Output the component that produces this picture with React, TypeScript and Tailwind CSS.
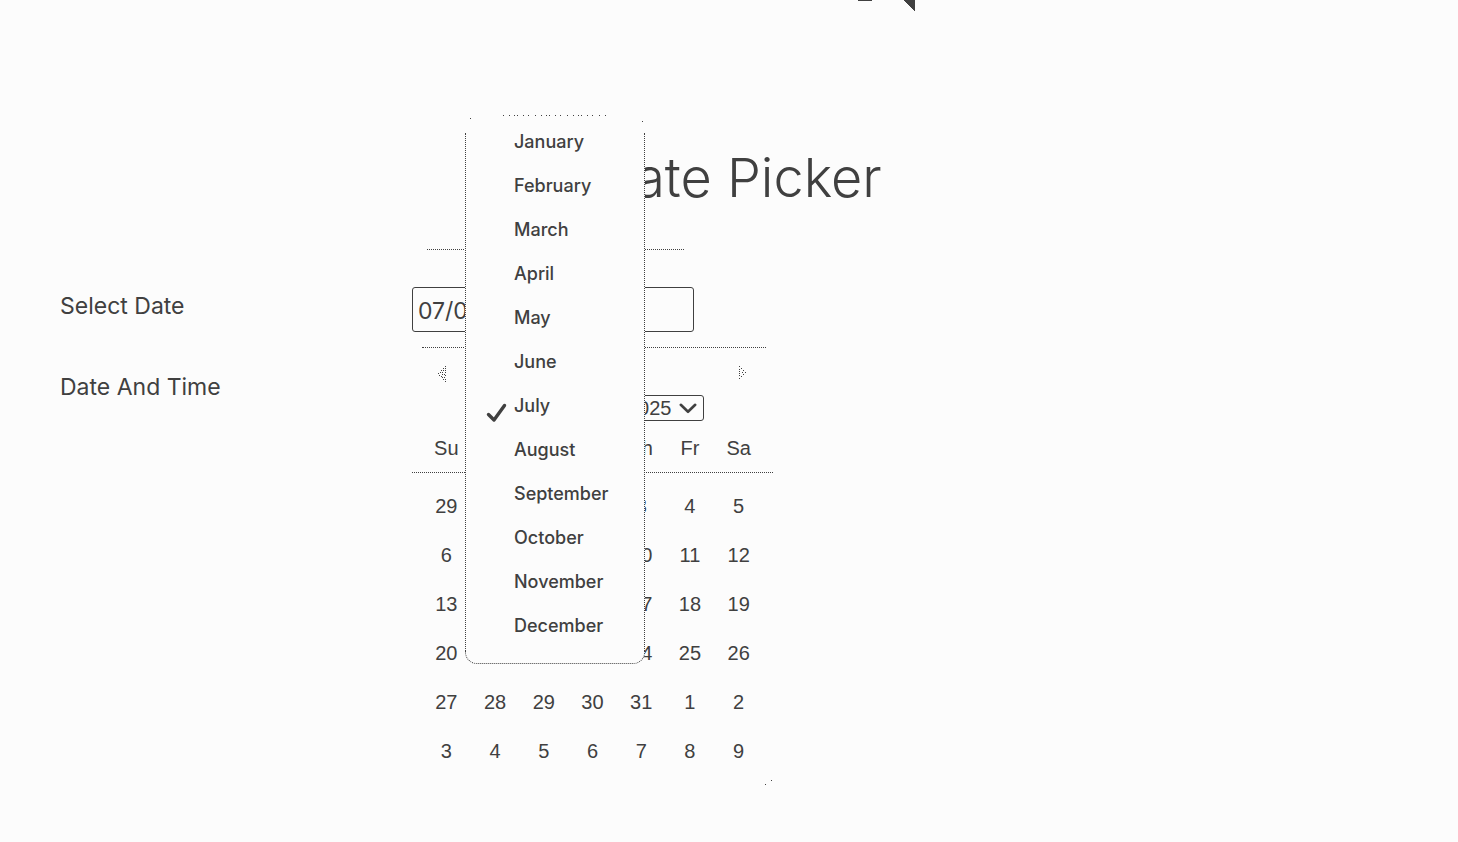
import { useState } from "react";

const MONTHS = [
  "January", "February", "March", "April", "May", "June",
  "July", "August", "September", "October", "November", "December",
];

const WEEKDAYS = ["Su", "Mo", "Tu", "We", "Th", "Fr", "Sa"];

const WEEKS = [
  [29, 30, 1, 2, 3, 4, 5],
  [6, 7, 8, 9, 10, 11, 12],
  [13, 14, 15, 16, 17, 18, 19],
  [20, 21, 22, 23, 24, 25, 26],
  [27, 28, 29, 30, 31, 1, 2],
  [3, 4, 5, 6, 7, 8, 9],
];

const LEFT_DOTS = [
  [7, 0], [5, 2], [7, 2], [3, 4], [5, 4], [7, 4], [2, 6], [4, 6], [7, 6], [0, 7], [4, 8],
  [6, 8], [1, 9], [7, 9], [3, 10], [6, 11], [4, 11], [5, 13], [7, 13], [7, 15],
];

const RIGHT_DOTS = [
  [0, 0], [2, 2], [0, 3], [4, 4], [0, 5], [6, 6], [3, 6], [0, 7], [4, 8], [0, 9], [2, 10], [0, 12],
];

function Dots({ points }: { points: number[][] }) {
  return (
    <svg width="8" height="16" viewBox="0 0 8 16" shapeRendering="crispEdges" fill="currentColor" aria-hidden="true">
      {points.map(([x, y]) => (
        <rect key={`${x}-${y}`} x={x} y={y} width="1" height="1" />
      ))}
    </svg>
  );
}

function MonthMenu({ month, onPick }: { month: string; onPick: (m: string) => void }) {
  return (
    <div className="absolute -left-[15px] -top-[280px] z-10 w-[180px]">
      <div className="h-[18px] bg-[#fcfcfc]">
        <svg className="block h-[18px] w-full" viewBox="0 0 180 18" shapeRendering="crispEdges" aria-hidden="true">
          <path d="M38 .5H143" stroke="currentColor" strokeDasharray="1 5 1 4 1 2 1 5 1 4 1 6" />
          <path d="M5 3.5h1M177 6.5h1" stroke="currentColor" />
        </svg>
      </div>
      <ul
        role="listbox"
        aria-label="Month"
        className="flex flex-col gap-[26px] border-x border-dotted border-[#404040] bg-[#fcfcfc] pb-4 font-['Inter',sans-serif] text-[18px] font-medium leading-[18px]"
      >
        {MONTHS.map((name) => (
          <li key={name} role="option" aria-selected={name === month} className="h-[18px]">
            <button type="button" onClick={() => onPick(name)} className="flex h-[18px] w-full pl-5 text-left">
              <span className="w-7 shrink-0">
                {name === month && (
                  <svg className="mt-[5px] h-[22px] w-[22px]" viewBox="0 0 22 22" fill="none" aria-hidden="true">
                    <path d="M2.5 12.5 8 18 18.5 3.5" stroke="currentColor" strokeWidth="3.4" strokeLinecap="round" strokeLinejoin="round" />
                  </svg>
                )}
              </span>
              {name}
            </button>
          </li>
        ))}
      </ul>
      <div className="h-[13px] rounded-b-xl border border-t-0 border-dotted border-[#404040] bg-[#fcfcfc]" />
    </div>
  );
}

export default function App() {
  const [month, setMonth] = useState("July");

  return (
    <div className="min-h-screen bg-[#fcfcfc] font-['Inter',sans-serif] text-[#404040]">
      <header className="flex h-[13px] pl-[858px]">
        <svg width="58" height="13" viewBox="0 0 58 13" shapeRendering="crispEdges" fill="currentColor" aria-hidden="true">
          <path d="M0 0h14v1H0zM45 0h12v12z" />
        </svg>
      </header>

      <h1 className="mt-[129px] pl-5 text-center text-[54px] font-light leading-[72px]">Date Picker</h1>

      <main className="pl-[60px]">
        <hr className="ml-[367px] mt-[35px] w-[257px] border-t border-dotted border-[#404040]" />
        <div className="mt-[37px] flex">
          <div className="flex w-[352px] shrink-0 flex-col gap-[51px] pt-1 text-[23px] leading-[30px]">
            <label htmlFor="date">Select Date</label>
            <span>Date And Time</span>
          </div>

          <div>
            <input
              id="date"
              type="text"
              defaultValue="07/04/2025"
              className="block h-[45px] w-[282px] rounded-[3px] border border-[#404040] bg-transparent px-[5px] pt-[3px] text-[23px]"
            />

            <section aria-label="Calendar" className="mt-[15px] w-[361px] font-['Liberation_Sans',sans-serif] text-[20px]">
              <div className="ml-[10px] mr-[7px] border-t border-dotted border-[#404040]" />
              <div className="flex h-[47px] items-center justify-between px-[26px] pt-1">
                <button type="button" aria-label="Previous month"><Dots points={LEFT_DOTS} /></button>
                <button type="button" aria-label="Next month"><Dots points={RIGHT_DOTS} /></button>
              </div>

              <div className="flex justify-end gap-2 pr-[69px]">
                <div className="relative">
                  <button
                    type="button"
                    aria-haspopup="listbox"
                    className="block h-[26px] w-[132px] rounded-[3px] border border-[#404040] px-[6px] text-left leading-[24px]"
                  >
                    {month}
                  </button>
                  <MonthMenu month={month} onPick={setMonth} />
                </div>
                <div className="relative">
                  <select
                    aria-label="Year"
                    defaultValue="2025"
                    className="block h-[26px] w-[84px] appearance-none rounded-[3px] border border-[#404040] bg-transparent px-[6px] leading-[24px]"
                  >
                    <option>2024</option>
                    <option>2025</option>
                    <option>2026</option>
                  </select>
                  <svg className="pointer-events-none absolute right-[7px] top-2 h-[11px] w-[18px]" viewBox="0 0 18 11" fill="none" aria-hidden="true">
                    <path d="m1.8 1.8 7.2 7 7.2-7" stroke="currentColor" strokeWidth="2.6" strokeLinecap="round" strokeLinejoin="round" />
                  </svg>
                </div>
              </div>

              <table className="block">
                <thead className="block border-b border-dotted border-[#404040] px-[10px]">
                  <tr className="grid grid-cols-7">
                    {WEEKDAYS.map((d) => (
                      <th key={d} scope="col" className="h-[51px] p-0 pt-[14px] text-center font-normal leading-[26px]">{d}</th>
                    ))}
                  </tr>
                </thead>
                <tbody className="block px-[10px] pt-[9px]">
                  {WEEKS.map((week, i) => (
                    <tr key={i} className="grid grid-cols-7">
                      {week.map((day) => (
                        <td key={day} className="h-[49px] p-0 text-center leading-[49px]">{day}</td>
                      ))}
                    </tr>
                  ))}
                </tbody>
              </table>
              <svg className="ml-auto block" width="8" height="9" viewBox="0 0 8 9" shapeRendering="crispEdges" aria-hidden="true">
                <path d="M6 4.5h1M0 8.5h1" stroke="currentColor" />
              </svg>
            </section>
          </div>
        </div>
      </main>
    </div>
  );
}
